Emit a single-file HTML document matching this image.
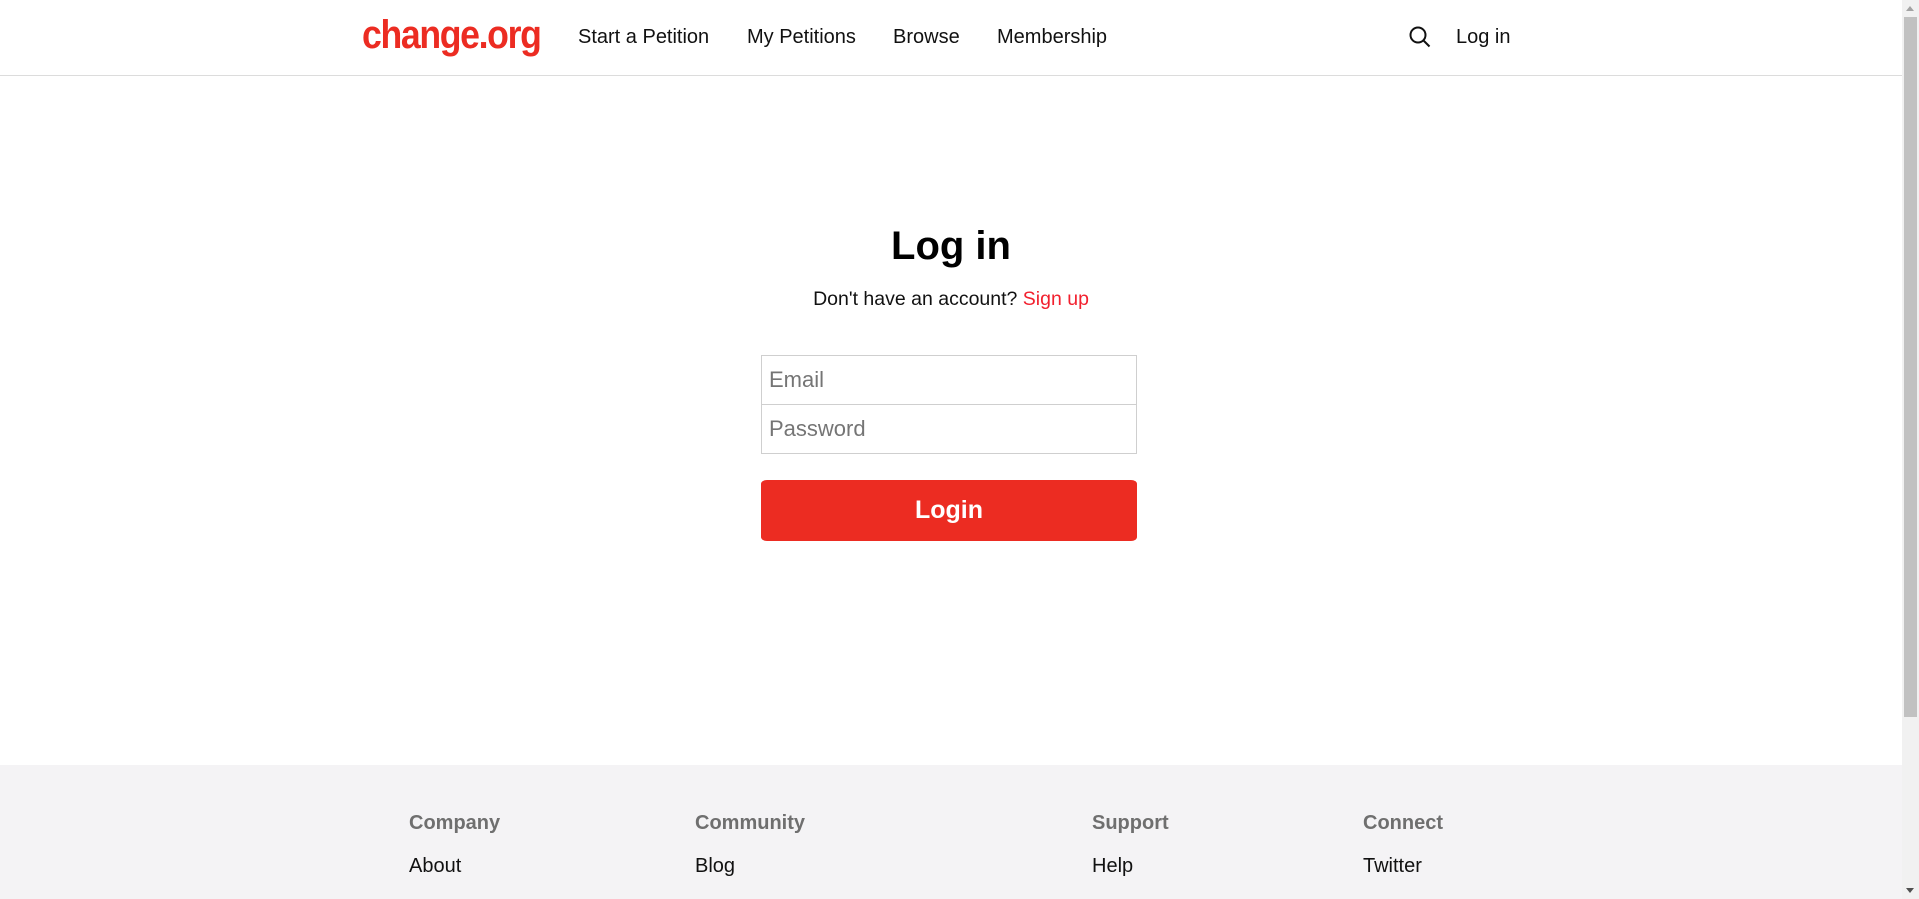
<!DOCTYPE html>
<html><head><meta charset="utf-8"><style>
*{margin:0;padding:0;box-sizing:border-box}
html,body{width:1919px;height:899px;overflow:hidden;background:#fff;font-family:"Liberation Sans",Arial,sans-serif;color:#111}
.abs{position:absolute;white-space:nowrap}
#hdr{position:absolute;left:0;top:0;width:1902px;height:76px;border-bottom:1px solid #dcdcdc}
.nav{font-size:20px;top:26px;color:#111}
#sb{position:absolute;left:1902px;top:0;width:17px;height:899px;background:#f1f1f1}
#thumb{position:absolute;left:2px;top:17px;width:13px;height:700px;background:#c1c1c1}
#foot{position:absolute;left:0;top:765px;width:1902px;height:134px;background:#f4f3f5}
.fh{font-size:20px;font-weight:bold;color:#6f6f6f;top:812px}
.fl{font-size:20px;color:#111;top:855px}
.inp{position:absolute;left:761px;width:376px;border:1px solid #cfcfcf;font-size:22px;color:#757575;padding-left:7px}
</style></head><body>
<div id="hdr"></div>
<div class="abs" style="left:362px;top:13px;font-size:40px;font-weight:bold;color:#ec2c22;letter-spacing:-1.5px;transform:scaleX(0.89);transform-origin:left">change.org</div>
<div class="abs nav" style="left:578px">Start a Petition</div>
<div class="abs nav" style="left:747px">My Petitions</div>
<div class="abs nav" style="left:893px">Browse</div>
<div class="abs nav" style="left:997px">Membership</div>
<svg class="abs" style="left:1408px;top:25px" width="24" height="24" viewBox="0 0 24 24"><circle cx="10" cy="10" r="7.5" fill="none" stroke="#111" stroke-width="2"/><line x1="15.5" y1="15.5" x2="21.5" y2="21.5" stroke="#111" stroke-width="2"/></svg>
<div class="abs nav" style="left:1456px">Log in</div>

<div class="abs" style="left:0;width:1902px;text-align:center;top:224px;font-size:40px;font-weight:bold;color:#000">Log in</div>
<div class="abs" style="left:0;width:1902px;text-align:center;top:288px;font-size:19.5px;color:#111">Don't have an account? <span style="color:#f2202e">Sign up</span></div>
<div class="inp" style="top:355px;height:50px;line-height:48px">Email</div>
<div class="inp" style="top:404px;height:50px;line-height:48px">Password</div>
<div class="abs" style="left:761px;top:480px;width:376px;height:61px;background:#ec2c22;border-radius:6px/4px;color:#fff;font-size:25px;font-weight:bold;text-align:center;line-height:61px">Login</div>

<div id="foot"></div>
<div class="abs fh" style="left:409px">Company</div>
<div class="abs fh" style="left:695px">Community</div>
<div class="abs fh" style="left:1092px">Support</div>
<div class="abs fh" style="left:1363px">Connect</div>
<div class="abs fl" style="left:409px">About</div>
<div class="abs fl" style="left:695px">Blog</div>
<div class="abs fl" style="left:1092px">Help</div>
<div class="abs fl" style="left:1363px">Twitter</div>

<div id="sb"><div id="thumb"></div>
<div style="position:absolute;left:4px;top:6px;border-left:4.5px solid transparent;border-right:4.5px solid transparent;border-bottom:5px solid #a3a3a3"></div>
<div style="position:absolute;left:4px;top:888px;border-left:4.5px solid transparent;border-right:4.5px solid transparent;border-top:5px solid #505050"></div>
</div>
</body></html>
